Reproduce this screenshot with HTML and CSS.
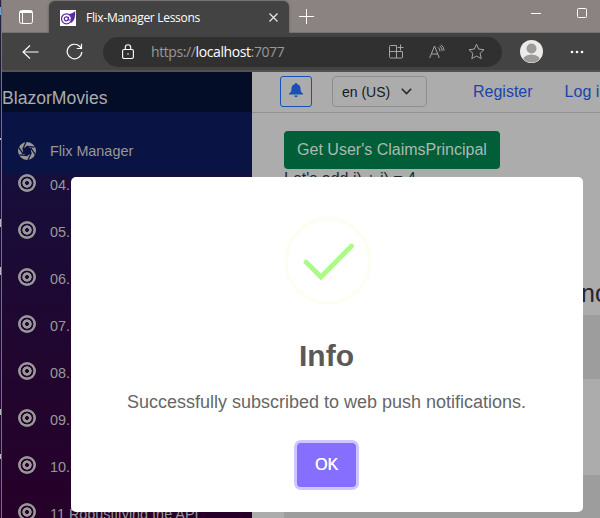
FILE: index.html
```html
<!DOCTYPE html>
<html lang="en">
<head>
<meta charset="utf-8">
<title>Flix-Manager Lessons</title>
<link rel="stylesheet" href="styles.css">
</head>
<body>
<div class="desktop">
  <i class="speck s1"></i><i class="speck s2"></i><i class="speck s3"></i><i class="speck s4"></i><i class="speck s5"></i><i class="speck s6"></i>
  <div class="browser">
    <header class="titlebar">
      <svg class="tabs-icon" width="14" height="14" viewBox="0 0 14 14" fill="none" stroke="#fff"><rect x=".5" y=".5" width="13" height="13" rx="2"/><path d="M1 1.500h12M1 2.500h12M3.500 3v10"/></svg>
      <div class="tab">
        <svg class="favicon" width="16" height="16" viewBox="0 0 16 16"><path fill="#fff" d="M0 0h16v16H0z"/><path d="M8 4c3 0 5-1 7.500-3-1 2 .3 3-.7 5.500 0 3-1.500 5-3.800 6.500z" fill="#5b2a9d"/><circle cx="6.500" cy="8.800" r="5" fill="#fff" stroke="#5b2a9d" stroke-width="1.200"/><circle cx="6.300" cy="8.800" r="2" fill="none" stroke="#5b2a9d" stroke-width="1.200"/><path d="M8.400 6.800v3q1.500 1.200 2-.8" fill="none" stroke="#5b2a9d"/></svg>
        <span class="tab-title">Flix-Manager Lessons</span>
        <svg class="close" width="9" height="9" viewBox="0 0 9 9" stroke="#e8e8e8" stroke-width="1.2"><path d="M.5.5l8 8M8.500.5l-8 8"/></svg>
      </div>
      <svg class="plus" width="15" height="15" viewBox="0 0 15 15" stroke="#fff"><path d="M0 7.500h15M7.500 0v15"/></svg>
      <svg class="minimize" width="10" height="10" viewBox="0 0 10 10" stroke="#fff"><path d="M0 5.500h10"/></svg>
      <svg class="maximize" width="10" height="10" viewBox="0 0 10 10" fill="none" stroke="#fff"><rect x=".5" y=".5" width="9" height="9" rx="1"/></svg>
    </header>
    <div class="toolbar">
      <svg class="back" width="17" height="14" viewBox="0 0 17 14" fill="none" stroke="#fff" stroke-width="1.1"><path d="M16.500 7H1M8 .5L1 7l7 6.500"/></svg>
      <svg class="reload" width="17" height="17" viewBox="0 0 17 17" fill="none" stroke="#fff" stroke-width="1.2"><path d="M15.800 9A7.300 7.300 0 1 1 13.800 3.500L15.500 5.300M15.500.8v4.700h-4.700"/></svg>
      <div class="address">
        <svg class="lock" width="12" height="16" viewBox="0 0 12 16" fill="none" stroke="#fff" stroke-width="1.1"><rect x=".6" y="5.500" width="10.800" height="9" rx="1.500"/><path d="M3.300 5.500V3.500a2.700 2.700 0 0 1 5.400 0v2"/><circle cx="6" cy="10" r=".8" fill="#fff" stroke="none"/></svg>
        <span class="url">https://<b>localhost</b>:7077</span>
        <svg class="apps" width="16" height="15" viewBox="0 0 16 15" fill="none" stroke="#a5a5a5"><path d="M7.500 1.500h-6q-1 0-1 1v10q0 1.500 1 1.500h11q1 0 1-1V7.500H.5M7.500 1.500V14M11.500.5v6M8.500 3.500h6"/></svg>
        <svg class="read" width="16" height="15" viewBox="0 0 16 15" fill="none" stroke="#a5a5a5"><path d="M.7 14L5.500 2l4.800 12M2.400 10h6.200M9 3.300q2 1.200 2 4M10.700 1.800q2.600 1.700 2.500 5.200M12 .7q3.200 2.300 3.100 6"/></svg>
        <svg class="star" width="17" height="17" viewBox="0 0 17 17" fill="none" stroke="#a5a5a5" stroke-linejoin="round"><path d="M8.500 1.200l2.200 4.900 5.300.6-3.900 3.600 1.100 5.400-4.700-2.700-4.700 2.700 1.100-5.400L1 6.700l5.300-.6z"/></svg>
      </div>
      <svg class="avatar" width="23" height="23" viewBox="0 0 23 23"><defs><clipPath id="head"><circle cx="11.500" cy="11.500" r="11"/></clipPath></defs><circle cx="11.500" cy="11.500" r="11.500" fill="#edebe9"/><g clip-path="url(#head)" fill="#9e9a97"><circle cx="11.500" cy="8.500" r="5"/><ellipse cx="11.500" cy="20" rx="8.500" ry="5.500"/></g></svg>
      <svg class="dots" width="14" height="4" viewBox="0 0 14 4" fill="#fff"><circle cx="2" cy="2" r="1.300"/><circle cx="7" cy="2" r="1.300"/><circle cx="12" cy="2" r="1.300"/></svg>
    </div>
    <div class="page">
      <aside class="sidebar">
        <div class="brand">BlazorMovies</div>
        <div class="nav-top">
          <svg width="18" height="18" viewBox="0 0 18 18"><circle cx="9" cy="9" r="6.300" fill="none" stroke="#999897" stroke-width="5.400"/><path d="M9 4.200L13.100 6.600V11.400L9 13.800L4.900 11.400V6.600z" fill="#0a1444"/><path d="M4.600 7.400L8.100-.2M8.400 4.300L16.700 5.200M12.800 5.900L17.500 12.900M13.400 10.600L9.900 18.200M9.600 13.700L1.300 12.800M5.200 12.100L.5 5.100" stroke="#0a1444" stroke-width="1.200"/></svg>
          <span>Flix Manager</span>
        </div>
        <nav class="nav-list">
          <div class="item"><i class="target"></i><span>04. Routing</span></div>
          <div class="item"><i class="target"></i><span>05.&thinsp;JavaScript</span></div>
          <div class="item"><i class="target"></i><span>06.&thinsp;Create forms</span></div>
          <div class="item"><i class="target"></i><span>07.&thinsp;Services</span></div>
          <div class="item"><i class="target"></i><span>08. Backend</span></div>
          <div class="item"><i class="target"></i><span>09. Entities</span></div>
          <div class="item"><i class="target"></i><span>10. Security</span></div>
          <div class="item"><i class="target"></i><span>11 Robustifying the API</span></div>
        </nav>
      </aside>
      <main class="main">
        <div class="topbar">
          <button class="bell"><svg width="14" height="15" viewBox="0 0 14 15" fill="#1a4fb5"><path d="M7 0c.8 0 1 .5 1 1 2.500.5 3.500 2.500 3.500 4.500 0 3 .8 3.800 2.500 5v1H0v-1c1.700-1.200 2.500-2 2.500-5C2.500 3.500 3.500 1.500 6 1c0-.5.2-1 1-1zM5.200 12.500h3.600q-.3 1.700-1.800 1.700t-1.800-1.700z"/></svg></button>
          <button class="lang"><span>en (US)</span><svg width="11" height="7" viewBox="0 0 11 7" fill="none" stroke="#24272b" stroke-width="1.500"><path d="M.8.8l4.700 4.800L10.200.8"/></svg></button>
          <a class="register">Register</a><a class="login">Log in</a>
        </div>
        <div class="content">
          <button class="claims">Get User's ClaimsPrincipal</button>
          <p>Let's add i) + i) = 4</p>
          <h2>now</h2>
          <div class="bands"><div class="band dark"></div><div class="band"></div><div class="band low"></div></div>
        </div>
      </main>
    </div>
  </div>
  <section class="modal">
    <svg class="success" width="88" height="88" viewBox="0 0 88 88" fill="none"><circle cx="44" cy="44" r="42" stroke="#fffdf2" stroke-width="3.500"/><path d="M22 45l15 15L67.500 29" stroke="#adfb87" stroke-width="4.800" stroke-linecap="round"/></svg>
    <h1>Info</h1>
    <p>Successfully subscribed to web push notifications.</p>
    <button class="ok">OK</button>
  </section>
</div>
</body>
</html>
```
FILE: styles.css
```css
* { box-sizing: border-box; }
body { margin: 0; font-family: "Liberation Sans", Arial, sans-serif; overflow: hidden; }
svg { display: block; flex: none; }
button { font-family: inherit; padding: 0; }
.desktop { position: relative; width: 600px; height: 518px; padding-left: 2px; overflow: hidden; background: linear-gradient(90deg, transparent 1px, #777080 1px), linear-gradient(#292747, #1c1b2e 12%, #060b35 20%, #170b34 38%, #25042e); }
.speck { position: absolute; left: 0; width: 1px; height: 2px; background: #b9b9c1; }
.s1 { top: 7px; height: 8px; background: #67a5d2; }
.s2 { top: 138px; }
.s3 { top: 219px; height: 8px; }
.s4 { top: 267px; height: 8px; }
.s5 { top: 409px; height: 6px; }
.s6 { top: 454px; height: 5px; }
.browser { width: 598px; height: 518px; background: #434343; display: flex; flex-direction: column; }
.titlebar { height: 33px; flex: none; display: flex; background: #8a8382; border-bottom: 1px solid #777170; }
.tabs-icon { margin: 10px 0 0 17px; }
.tab { width: 240px; height: 33px; margin-left: 16px; margin-top: 1px; border-radius: 6px 6px 0 0; background: #434343; display: flex; align-items: center; padding-left: 11px; box-shadow: 0 0 3px #5b5655; }
.tab-title { width: 125px; margin-left: 10px; font: 12px/16px "Open Sans", sans-serif; letter-spacing: -.3px; color: #fff; white-space: nowrap; }
.close { margin-left: 58px; }
.plus { margin: 9px 0 0 10px; }
.minimize { margin: 8px 0 0 217px; }
.maximize { margin: 8px 0 0 36px; }
.toolbar { height: 39px; flex: none; display: flex; align-items: center; background: #434343; border-bottom: 2px solid #555151; padding-left: 20px; }
.reload { margin-left: 27px; }
.address { width: 399px; height: 30px; margin-left: 20px; border-radius: 15px; background: #303030; display: flex; align-items: center; padding-left: 19px; flex: none; }
.url { width: 238px; margin-left: 17px; font: 14px/20px "Open Sans", sans-serif; letter-spacing: -.4px; color: #989898; white-space: nowrap; }
.url b { color: #fff; font-weight: 400; }
.read { margin-left: 24px; }
.star { margin-left: 23px; }
.avatar { margin-left: 18px; }
.dots { margin-left: 27px; }
.page { flex: 1; min-height: 0; display: flex; }
.sidebar { width: 250px; flex: none; overflow: hidden; color: #999897; background: linear-gradient(#0a1444, #180d3a 27%, #21062f 65%, #260029); }
.brand { height: 40px; padding-top: 15px; font-size: 17.6px; line-height: 22px; background: #030d27; color: #acacac; }
.nav-top { height: 62px; padding: 16px 0 0 16px; display: flex; gap: 14px; align-items: center; background: #0a1444; font-size: 14.4px; }
.nav-list { height: 344px; overflow: hidden; padding-left: 16px; font-size: 14.4px; }
.item { height: 47px; display: flex; align-items: center; gap: 14px; white-space: nowrap; }
.item:first-child { margin-top: -15px; }
.item span { padding-top: 4px; }
.target { width: 18px; height: 18px; flex: none; border-radius: 50%; background: radial-gradient(circle, transparent 1.600px, #999897 2.200px 4.400px, transparent 4.900px 6.200px, #999897 6.700px 9px, transparent 9.300px); }
.main { flex: 1; min-width: 0; overflow: hidden; background: #acacac; }
.topbar { height: 41px; border-bottom: 1px solid #929292; display: flex; padding: 4px 0 0 28px; }
.topbar > * { flex: none; }
.bell { width: 32px; height: 31px; border: 1px solid #1a4fb5; border-radius: 3px; background: none; display: flex; justify-content: center; padding-top: 6px; }
.lang { width: 95px; height: 31px; margin-left: 20px; border: 1px solid #8b8f94; border-radius: 4px; background: none; display: flex; align-items: center; gap: 11px; padding-left: 9px; font-size: 14px; color: #16191c; }
.topbar a { font-size: 16px; line-height: 31px; color: #1b43ab; white-space: nowrap; }
.register { margin-left: 46px; }
.login { margin-left: 32px; }
.content { padding: 18px 0 0 32px; }
.claims { display: block; width: 216px; height: 38px; border: 0; border-radius: 4px; background: #005f39; color: #acb9b2; font-size: 16px; }
.content p { margin: 0; font-size: 16px; line-height: 20px; color: #24272b; }
.content h2 { margin: 89px 0 0; padding-left: 297px; font-size: 25px; line-height: 30px; font-weight: 400; color: #24272b; white-space: nowrap; }
.bands { margin-top: 7px; }
.band { height: 96px; }
.dark { height: 64px; background: #9d9d9d; }
.low { background: #9d9d9d; }
.modal { position: absolute; left: 71px; top: 177px; width: 512px; height: 335px; border-radius: 5px; background: #fff; display: flex; flex-direction: column; align-items: center; padding: 40px 1px 0 0; }
.modal h1 { margin: 43px 0 0; font-size: 30px; line-height: 36px; color: #595959; }
.success { margin: 0 0 -10px 2px; }
.modal p { margin: 17px 0 0; font-size: 18px; line-height: 22px; color: #666; }
.ok { width: 59px; height: 44px; margin-top: 30px; border: 0; border-radius: 4px; background: #866eff; box-shadow: 0 0 0 3px #d0c5fe; color: #fff; font-size: 16px; text-shadow: .3px 0 #fff; }
```
